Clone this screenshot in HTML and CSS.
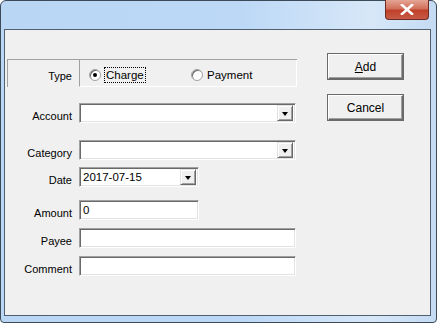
FILE: index.html
```html
<!DOCTYPE html>
<html lang="en">
<head>
    <meta charset="UTF-8">
    <meta name="viewport" content="width=device-width, initial-scale=1.0">
    <title>Add Transaction</title>
    <link rel="stylesheet" href="styles.css">
</head>
<body>
    <div class="window">
        <div class="titlebar">
            <div class="close-btn">
                <svg width="14" height="11" viewBox="0 0 14 11">
                    <path d="M2 1 L12 10 M12 1 L2 10" stroke="#fff" stroke-width="2.6" stroke-linecap="square"/>
                </svg>
            </div>
        </div>
        <div class="client">
            <div class="form">
                <div class="typegroup">
                    <span class="label">Type</span>
                    <div class="radiobox">
                        <div class="radio">
                            <span class="dot checked"></span>
                            <span class="focus">Charge</span>
                        </div>
                        <div class="radio second">
                            <span class="dot"></span>
                            <span>Payment</span>
                        </div>
                    </div>
                </div>

                <div class="row account">
                    <span class="label">Account</span>
                    <div class="field combo wide"><span class="val"></span><span class="drop"></span></div>
                </div>
                <div class="row category">
                    <span class="label">Category</span>
                    <div class="field combo wide"><span class="val"></span><span class="drop"></span></div>
                </div>
                <div class="row date">
                    <span class="label">Date</span>
                    <div class="field combo short"><span class="val">2017-07-15</span><span class="drop"></span></div>
                </div>
                <div class="row amount">
                    <span class="label">Amount</span>
                    <div class="field short"><span class="val">0</span></div>
                </div>
                <div class="row payee">
                    <span class="label">Payee</span>
                    <div class="field wide"><span class="val"></span></div>
                </div>
                <div class="row comment">
                    <span class="label">Comment</span>
                    <div class="field wide"><span class="val"></span></div>
                </div>
            </div>

            <div class="buttons">
                <div class="btn"><u>A</u>dd</div>
                <div class="btn">Cancel</div>
            </div>
        </div>
    </div>
</body>
</html>
```

FILE: styles.css
```css
* {
    box-sizing: border-box;
}

body {
    margin: 0;
    width: 437px;
    height: 323px;
    background: #ffffff;
    font-family: "Liberation Sans", Arial, sans-serif;
    font-size: 11px;
    color: #000;
}

.window {
    width: 437px;
    height: 323px;
    border: 1px solid #3c4a58;
    border-radius: 6px 6px 4px 4px;
    background: linear-gradient(90deg, #b9d6f5 0%, #bcd8f6 55%, #d7e7f8 85%, #c4dbf3 100%);
    display: flex;
    flex-direction: column;
}

.titlebar {
    height: 28px;
    flex: none;
    display: flex;
    justify-content: flex-end;
    padding-right: 7px;
}

.close-btn {
    width: 44px;
    height: 20px;
    margin-top: -1px;
    border: 1px solid #6e2a24;
    border-top: none;
    border-radius: 0 0 4px 4px;
    background: linear-gradient(180deg, #e4a595 0%, #d2705c 45%, #c0412a 55%, #c85a45 100%);
    display: flex;
    align-items: center;
    justify-content: center;
}

.client {
    flex: 1;
    margin: 0 5px 6px 3px;
    border: 1px solid #506070;
    background: #f0f0f0;
    display: flex;
}

.form {
    width: 300px;
    padding-top: 29px;
}

.label {
    width: 67px;
    text-align: right;
    flex: none;
}

.typegroup {
    display: flex;
    align-items: center;
    margin-left: 2px;
    width: 290px;
    height: 28px;
    border-top: 1px solid #a0a0a0;
    border-left: 1px solid #a0a0a0;
}

.typegroup .label {
    width: 64px;
    padding-top: 5px;
}

.radiobox {
    margin-left: 7px;
    align-self: stretch;
    width: 218px;
    border: 1px solid #a0a0a0;
    border-top: none;
    border-right-color: #fff;
    border-bottom-color: #fff;
    display: flex;
    align-items: center;
    padding-left: 9px;
    padding-top: 3px;
}

.radio {
    display: flex;
    align-items: center;
    gap: 4px;
    width: 102px;
    font-size: 11.5px;
}

.dot {
    width: 12px;
    height: 12px;
    border-radius: 50%;
    background: #fff;
    border: 1px solid #a0a0a0;
    box-shadow: inset 1px 1px 0 #696969;
    position: relative;
}

.dot.checked::after {
    content: "";
    position: absolute;
    left: 3px;
    top: 3px;
    width: 4px;
    height: 4px;
    border-radius: 50%;
    background: #000;
}

.focus {
    outline: 1px dotted #000;
    padding: 1px 1px;
}

.row {
    display: flex;
    align-items: center;
}

.row .label {
    margin-right: 7px;
    padding-top: 6px;
}

.field {
    height: 20px;
    background: #fff;
    border-top: 1px solid #a0a0a0;
    border-left: 1px solid #a0a0a0;
    border-right: 1px solid #fff;
    border-bottom: 1px solid #fff;
    box-shadow: inset 1px 1px 0 #696969, inset -1px -1px 0 #e3e3e3;
    display: flex;
    align-items: center;
    padding: 0 2px 0 3px;
    font-size: 11.5px;
}

.field .val {
    flex: 1;
}

.wide {
    width: 217px;
}

.short {
    width: 120px;
}

.drop {
    width: 16px;
    height: 16px;
    background: #f0f0f0;
    border-top: 1px solid #e3e3e3;
    border-left: 1px solid #e3e3e3;
    border-right: 1px solid #696969;
    border-bottom: 1px solid #696969;
    box-shadow: inset 1px 1px 0 #fff, inset -1px -1px 0 #a0a0a0;
    position: relative;
}

.drop::after {
    content: "";
    position: absolute;
    left: 4px;
    top: 6px;
    border-left: 3.5px solid transparent;
    border-right: 3.5px solid transparent;
    border-top: 4px solid #000;
}

.account {
    margin-top: 16px;
}

.category {
    margin-top: 17px;
}

.date {
    margin-top: 7px;
}

.amount {
    margin-top: 13px;
}

.payee {
    margin-top: 8px;
}

.comment {
    margin-top: 8px;
}

.buttons {
    display: flex;
    flex-direction: column;
    gap: 16px;
    padding-top: 24px;
    margin-left: 23px;
}

.btn {
    width: 75px;
    height: 25px;
    display: flex;
    align-items: center;
    justify-content: center;
    border-top: 1px solid #fff;
    border-left: 1px solid #fff;
    border-right: 1px solid #696969;
    border-bottom: 1px solid #696969;
    box-shadow: inset -1px -1px 0 #a0a0a0, 0 0 0 1px #6a6a6a;
    background: #f0f0f0;
    font-size: 12px;
}
```
